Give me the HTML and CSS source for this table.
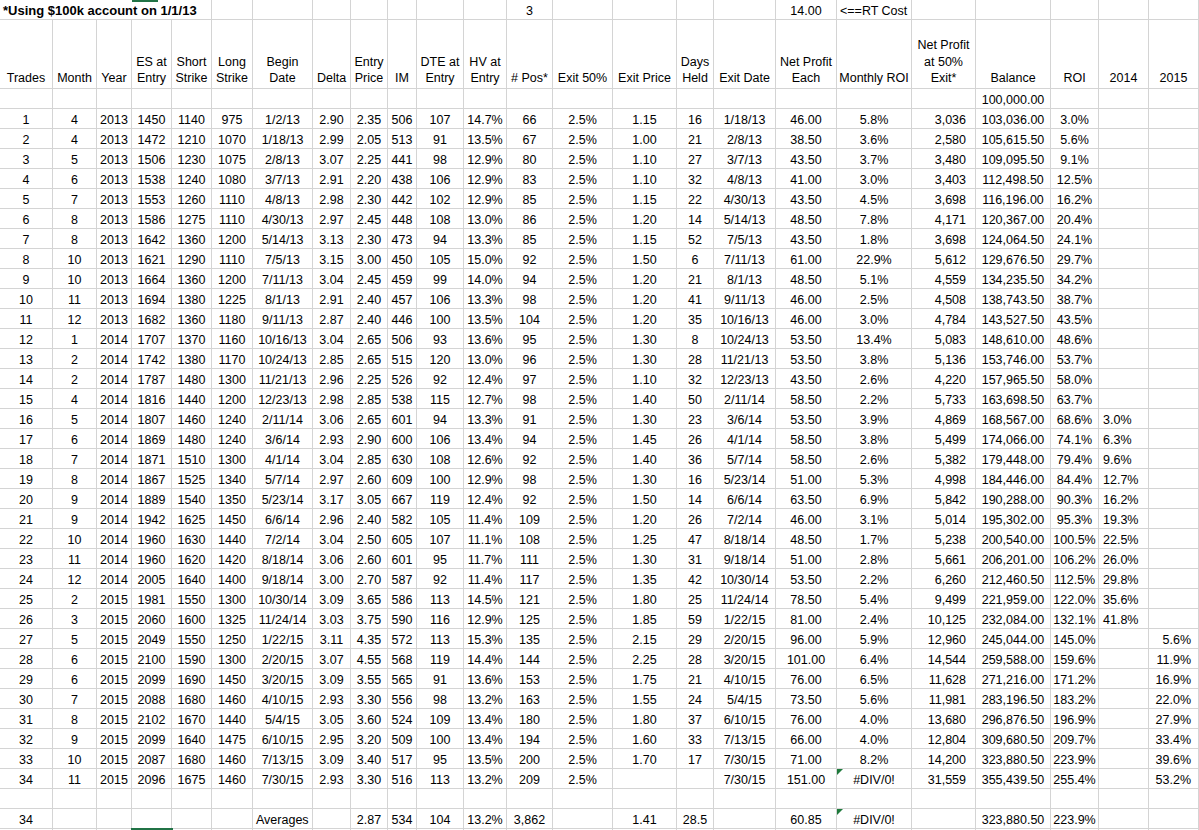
FILE: index.html
```html
<!DOCTYPE html>
<html>
<head>
<meta charset="utf-8">
<title>Trades</title>
<link rel="stylesheet" href="styles.css">
</head>
<body>
<div class="sheet">
  <div class="row top">
    <div class="title">*Using $100k account on 1/1/13</div>
    <div></div><div></div><div></div><div></div><div></div><div></div><div></div>
    <div>3</div>
    <div></div><div></div><div></div><div></div>
    <div>14.00</div>
    <div class="left">&lt;==RT Cost</div>
    <div></div><div></div><div></div><div></div><div></div>
  </div>
  <div class="row head">
    <div><span>Trades</span></div>
    <div><span>Month</span></div>
    <div><span>Year</span></div>
    <div><span>ES at<br>Entry</span></div>
    <div><span>Short<br>Strike</span></div>
    <div><span>Long<br>Strike</span></div>
    <div><span>Begin<br>Date</span></div>
    <div><span>Delta</span></div>
    <div><span>Entry<br>Price</span></div>
    <div><span>IM</span></div>
    <div><span>DTE at<br>Entry</span></div>
    <div><span>HV at<br>Entry</span></div>
    <div><span># Pos*</span></div>
    <div><span>Exit 50%</span></div>
    <div><span>Exit Price</span></div>
    <div><span>Days<br>Held</span></div>
    <div><span>Exit Date</span></div>
    <div><span>Net Profit<br>Each</span></div>
    <div><span>Monthly ROI</span></div>
    <div><span>Net Profit<br>at 50%<br>Exit*</span></div>
    <div><span>Balance</span></div>
    <div><span>ROI</span></div>
    <div><span>2014</span></div>
    <div><span>2015</span></div>
  </div>
  <div class="row"><div></div><div></div><div></div><div></div><div></div><div></div><div></div><div></div><div></div><div></div><div></div><div></div><div></div><div></div><div></div><div></div><div></div><div></div><div></div><div></div><div>100,000.00</div><div></div><div></div><div></div></div>
  <div class="row"><div>1</div><div>4</div><div>2013</div><div>1450</div><div>1140</div><div>975</div><div>1/2/13</div><div>2.90</div><div>2.35</div><div>506</div><div>107</div><div>14.7%</div><div>66</div><div>2.5%</div><div>1.15</div><div>16</div><div>1/18/13</div><div>46.00</div><div>5.8%</div><div>3,036</div><div>103,036.00</div><div>3.0%</div><div></div><div></div></div>
  <div class="row"><div>2</div><div>4</div><div>2013</div><div>1472</div><div>1210</div><div>1070</div><div>1/18/13</div><div>2.99</div><div>2.05</div><div>513</div><div>91</div><div>13.5%</div><div>67</div><div>2.5%</div><div>1.00</div><div>21</div><div>2/8/13</div><div>38.50</div><div>3.6%</div><div>2,580</div><div>105,615.50</div><div>5.6%</div><div></div><div></div></div>
  <div class="row"><div>3</div><div>5</div><div>2013</div><div>1506</div><div>1230</div><div>1075</div><div>2/8/13</div><div>3.07</div><div>2.25</div><div>441</div><div>98</div><div>12.9%</div><div>80</div><div>2.5%</div><div>1.10</div><div>27</div><div>3/7/13</div><div>43.50</div><div>3.7%</div><div>3,480</div><div>109,095.50</div><div>9.1%</div><div></div><div></div></div>
  <div class="row"><div>4</div><div>6</div><div>2013</div><div>1538</div><div>1240</div><div>1080</div><div>3/7/13</div><div>2.91</div><div>2.20</div><div>438</div><div>106</div><div>12.9%</div><div>83</div><div>2.5%</div><div>1.10</div><div>32</div><div>4/8/13</div><div>41.00</div><div>3.0%</div><div>3,403</div><div>112,498.50</div><div>12.5%</div><div></div><div></div></div>
  <div class="row"><div>5</div><div>7</div><div>2013</div><div>1553</div><div>1260</div><div>1110</div><div>4/8/13</div><div>2.98</div><div>2.30</div><div>442</div><div>102</div><div>12.9%</div><div>85</div><div>2.5%</div><div>1.15</div><div>22</div><div>4/30/13</div><div>43.50</div><div>4.5%</div><div>3,698</div><div>116,196.00</div><div>16.2%</div><div></div><div></div></div>
  <div class="row"><div>6</div><div>8</div><div>2013</div><div>1586</div><div>1275</div><div>1110</div><div>4/30/13</div><div>2.97</div><div>2.45</div><div>448</div><div>108</div><div>13.0%</div><div>86</div><div>2.5%</div><div>1.20</div><div>14</div><div>5/14/13</div><div>48.50</div><div>7.8%</div><div>4,171</div><div>120,367.00</div><div>20.4%</div><div></div><div></div></div>
  <div class="row"><div>7</div><div>8</div><div>2013</div><div>1642</div><div>1360</div><div>1200</div><div>5/14/13</div><div>3.13</div><div>2.30</div><div>473</div><div>94</div><div>13.3%</div><div>85</div><div>2.5%</div><div>1.15</div><div>52</div><div>7/5/13</div><div>43.50</div><div>1.8%</div><div>3,698</div><div>124,064.50</div><div>24.1%</div><div></div><div></div></div>
  <div class="row"><div>8</div><div>10</div><div>2013</div><div>1621</div><div>1290</div><div>1110</div><div>7/5/13</div><div>3.15</div><div>3.00</div><div>450</div><div>105</div><div>15.0%</div><div>92</div><div>2.5%</div><div>1.50</div><div>6</div><div>7/11/13</div><div>61.00</div><div>22.9%</div><div>5,612</div><div>129,676.50</div><div>29.7%</div><div></div><div></div></div>
  <div class="row"><div>9</div><div>10</div><div>2013</div><div>1664</div><div>1360</div><div>1200</div><div>7/11/13</div><div>3.04</div><div>2.45</div><div>459</div><div>99</div><div>14.0%</div><div>94</div><div>2.5%</div><div>1.20</div><div>21</div><div>8/1/13</div><div>48.50</div><div>5.1%</div><div>4,559</div><div>134,235.50</div><div>34.2%</div><div></div><div></div></div>
  <div class="row"><div>10</div><div>11</div><div>2013</div><div>1694</div><div>1380</div><div>1225</div><div>8/1/13</div><div>2.91</div><div>2.40</div><div>457</div><div>106</div><div>13.3%</div><div>98</div><div>2.5%</div><div>1.20</div><div>41</div><div>9/11/13</div><div>46.00</div><div>2.5%</div><div>4,508</div><div>138,743.50</div><div>38.7%</div><div></div><div></div></div>
  <div class="row"><div>11</div><div>12</div><div>2013</div><div>1682</div><div>1360</div><div>1180</div><div>9/11/13</div><div>2.87</div><div>2.40</div><div>446</div><div>100</div><div>13.5%</div><div>104</div><div>2.5%</div><div>1.20</div><div>35</div><div>10/16/13</div><div>46.00</div><div>3.0%</div><div>4,784</div><div>143,527.50</div><div>43.5%</div><div></div><div></div></div>
  <div class="row"><div>12</div><div>1</div><div>2014</div><div>1707</div><div>1370</div><div>1160</div><div>10/16/13</div><div>3.04</div><div>2.65</div><div>506</div><div>93</div><div>13.6%</div><div>95</div><div>2.5%</div><div>1.30</div><div>8</div><div>10/24/13</div><div>53.50</div><div>13.4%</div><div>5,083</div><div>148,610.00</div><div>48.6%</div><div></div><div></div></div>
  <div class="row"><div>13</div><div>2</div><div>2014</div><div>1742</div><div>1380</div><div>1170</div><div>10/24/13</div><div>2.85</div><div>2.65</div><div>515</div><div>120</div><div>13.0%</div><div>96</div><div>2.5%</div><div>1.30</div><div>28</div><div>11/21/13</div><div>53.50</div><div>3.8%</div><div>5,136</div><div>153,746.00</div><div>53.7%</div><div></div><div></div></div>
  <div class="row"><div>14</div><div>2</div><div>2014</div><div>1787</div><div>1480</div><div>1300</div><div>11/21/13</div><div>2.96</div><div>2.25</div><div>526</div><div>92</div><div>12.4%</div><div>97</div><div>2.5%</div><div>1.10</div><div>32</div><div>12/23/13</div><div>43.50</div><div>2.6%</div><div>4,220</div><div>157,965.50</div><div>58.0%</div><div></div><div></div></div>
  <div class="row"><div>15</div><div>4</div><div>2014</div><div>1816</div><div>1440</div><div>1200</div><div>12/23/13</div><div>2.98</div><div>2.85</div><div>538</div><div>115</div><div>12.7%</div><div>98</div><div>2.5%</div><div>1.40</div><div>50</div><div>2/11/14</div><div>58.50</div><div>2.2%</div><div>5,733</div><div>163,698.50</div><div>63.7%</div><div></div><div></div></div>
  <div class="row"><div>16</div><div>5</div><div>2014</div><div>1807</div><div>1460</div><div>1240</div><div>2/11/14</div><div>3.06</div><div>2.65</div><div>601</div><div>94</div><div>13.3%</div><div>91</div><div>2.5%</div><div>1.30</div><div>23</div><div>3/6/14</div><div>53.50</div><div>3.9%</div><div>4,869</div><div>168,567.00</div><div>68.6%</div><div>3.0%</div><div></div></div>
  <div class="row"><div>17</div><div>6</div><div>2014</div><div>1869</div><div>1480</div><div>1240</div><div>3/6/14</div><div>2.93</div><div>2.90</div><div>600</div><div>106</div><div>13.4%</div><div>94</div><div>2.5%</div><div>1.45</div><div>26</div><div>4/1/14</div><div>58.50</div><div>3.8%</div><div>5,499</div><div>174,066.00</div><div>74.1%</div><div>6.3%</div><div></div></div>
  <div class="row"><div>18</div><div>7</div><div>2014</div><div>1871</div><div>1510</div><div>1300</div><div>4/1/14</div><div>3.04</div><div>2.85</div><div>630</div><div>108</div><div>12.6%</div><div>92</div><div>2.5%</div><div>1.40</div><div>36</div><div>5/7/14</div><div>58.50</div><div>2.6%</div><div>5,382</div><div>179,448.00</div><div>79.4%</div><div>9.6%</div><div></div></div>
  <div class="row"><div>19</div><div>8</div><div>2014</div><div>1867</div><div>1525</div><div>1340</div><div>5/7/14</div><div>2.97</div><div>2.60</div><div>609</div><div>100</div><div>12.9%</div><div>98</div><div>2.5%</div><div>1.30</div><div>16</div><div>5/23/14</div><div>51.00</div><div>5.3%</div><div>4,998</div><div>184,446.00</div><div>84.4%</div><div>12.7%</div><div></div></div>
  <div class="row"><div>20</div><div>9</div><div>2014</div><div>1889</div><div>1540</div><div>1350</div><div>5/23/14</div><div>3.17</div><div>3.05</div><div>667</div><div>119</div><div>12.4%</div><div>92</div><div>2.5%</div><div>1.50</div><div>14</div><div>6/6/14</div><div>63.50</div><div>6.9%</div><div>5,842</div><div>190,288.00</div><div>90.3%</div><div>16.2%</div><div></div></div>
  <div class="row"><div>21</div><div>9</div><div>2014</div><div>1942</div><div>1625</div><div>1450</div><div>6/6/14</div><div>2.96</div><div>2.40</div><div>582</div><div>105</div><div>11.4%</div><div>109</div><div>2.5%</div><div>1.20</div><div>26</div><div>7/2/14</div><div>46.00</div><div>3.1%</div><div>5,014</div><div>195,302.00</div><div>95.3%</div><div>19.3%</div><div></div></div>
  <div class="row"><div>22</div><div>10</div><div>2014</div><div>1960</div><div>1630</div><div>1440</div><div>7/2/14</div><div>3.04</div><div>2.50</div><div>605</div><div>107</div><div>11.1%</div><div>108</div><div>2.5%</div><div>1.25</div><div>47</div><div>8/18/14</div><div>48.50</div><div>1.7%</div><div>5,238</div><div>200,540.00</div><div>100.5%</div><div>22.5%</div><div></div></div>
  <div class="row"><div>23</div><div>11</div><div>2014</div><div>1960</div><div>1620</div><div>1420</div><div>8/18/14</div><div>3.06</div><div>2.60</div><div>601</div><div>95</div><div>11.7%</div><div>111</div><div>2.5%</div><div>1.30</div><div>31</div><div>9/18/14</div><div>51.00</div><div>2.8%</div><div>5,661</div><div>206,201.00</div><div>106.2%</div><div>26.0%</div><div></div></div>
  <div class="row"><div>24</div><div>12</div><div>2014</div><div>2005</div><div>1640</div><div>1400</div><div>9/18/14</div><div>3.00</div><div>2.70</div><div>587</div><div>92</div><div>11.4%</div><div>117</div><div>2.5%</div><div>1.35</div><div>42</div><div>10/30/14</div><div>53.50</div><div>2.2%</div><div>6,260</div><div>212,460.50</div><div>112.5%</div><div>29.8%</div><div></div></div>
  <div class="row"><div>25</div><div>2</div><div>2015</div><div>1981</div><div>1550</div><div>1300</div><div>10/30/14</div><div>3.09</div><div>3.65</div><div>586</div><div>113</div><div>14.5%</div><div>121</div><div>2.5%</div><div>1.80</div><div>25</div><div>11/24/14</div><div>78.50</div><div>5.4%</div><div>9,499</div><div>221,959.00</div><div>122.0%</div><div>35.6%</div><div></div></div>
  <div class="row"><div>26</div><div>3</div><div>2015</div><div>2060</div><div>1600</div><div>1325</div><div>11/24/14</div><div>3.03</div><div>3.75</div><div>590</div><div>116</div><div>12.9%</div><div>125</div><div>2.5%</div><div>1.85</div><div>59</div><div>1/22/15</div><div>81.00</div><div>2.4%</div><div>10,125</div><div>232,084.00</div><div>132.1%</div><div>41.8%</div><div></div></div>
  <div class="row"><div>27</div><div>5</div><div>2015</div><div>2049</div><div>1550</div><div>1250</div><div>1/22/15</div><div>3.11</div><div>4.35</div><div>572</div><div>113</div><div>15.3%</div><div>135</div><div>2.5%</div><div>2.15</div><div>29</div><div>2/20/15</div><div>96.00</div><div>5.9%</div><div>12,960</div><div>245,044.00</div><div>145.0%</div><div></div><div>5.6%</div></div>
  <div class="row"><div>28</div><div>6</div><div>2015</div><div>2100</div><div>1590</div><div>1300</div><div>2/20/15</div><div>3.07</div><div>4.55</div><div>568</div><div>119</div><div>14.4%</div><div>144</div><div>2.5%</div><div>2.25</div><div>28</div><div>3/20/15</div><div>101.00</div><div>6.4%</div><div>14,544</div><div>259,588.00</div><div>159.6%</div><div></div><div>11.9%</div></div>
  <div class="row"><div>29</div><div>6</div><div>2015</div><div>2099</div><div>1690</div><div>1450</div><div>3/20/15</div><div>3.09</div><div>3.55</div><div>565</div><div>91</div><div>13.6%</div><div>153</div><div>2.5%</div><div>1.75</div><div>21</div><div>4/10/15</div><div>76.00</div><div>6.5%</div><div>11,628</div><div>271,216.00</div><div>171.2%</div><div></div><div>16.9%</div></div>
  <div class="row"><div>30</div><div>7</div><div>2015</div><div>2088</div><div>1680</div><div>1460</div><div>4/10/15</div><div>2.93</div><div>3.30</div><div>556</div><div>98</div><div>13.2%</div><div>163</div><div>2.5%</div><div>1.55</div><div>24</div><div>5/4/15</div><div>73.50</div><div>5.6%</div><div>11,981</div><div>283,196.50</div><div>183.2%</div><div></div><div>22.0%</div></div>
  <div class="row"><div>31</div><div>8</div><div>2015</div><div>2102</div><div>1670</div><div>1440</div><div>5/4/15</div><div>3.05</div><div>3.60</div><div>524</div><div>109</div><div>13.4%</div><div>180</div><div>2.5%</div><div>1.80</div><div>37</div><div>6/10/15</div><div>76.00</div><div>4.0%</div><div>13,680</div><div>296,876.50</div><div>196.9%</div><div></div><div>27.9%</div></div>
  <div class="row"><div>32</div><div>9</div><div>2015</div><div>2099</div><div>1640</div><div>1475</div><div>6/10/15</div><div>2.95</div><div>3.20</div><div>509</div><div>100</div><div>13.4%</div><div>194</div><div>2.5%</div><div>1.60</div><div>33</div><div>7/13/15</div><div>66.00</div><div>4.0%</div><div>12,804</div><div>309,680.50</div><div>209.7%</div><div></div><div>33.4%</div></div>
  <div class="row"><div>33</div><div>10</div><div>2015</div><div>2087</div><div>1680</div><div>1460</div><div>7/13/15</div><div>3.09</div><div>3.40</div><div>517</div><div>95</div><div>13.5%</div><div>200</div><div>2.5%</div><div>1.70</div><div>17</div><div>7/30/15</div><div>71.00</div><div>8.2%</div><div>14,200</div><div>323,880.50</div><div>223.9%</div><div></div><div>39.6%</div></div>
  <div class="row"><div>34</div><div>11</div><div>2015</div><div>2096</div><div>1675</div><div>1460</div><div>7/30/15</div><div>2.93</div><div>3.30</div><div>516</div><div>113</div><div>13.2%</div><div>209</div><div>2.5%</div><div></div><div></div><div>7/30/15</div><div>151.00</div><div class="err">#DIV/0!</div><div>31,559</div><div>355,439.50</div><div>255.4%</div><div></div><div>53.2%</div></div>
  <div class="row"><div></div><div></div><div></div><div></div><div></div><div></div><div></div><div></div><div></div><div></div><div></div><div></div><div></div><div></div><div></div><div></div><div></div><div></div><div></div><div></div><div></div><div></div><div></div><div></div></div>
  <div class="row"><div>34</div><div></div><div></div><div></div><div></div><div></div><div class="left">Averages</div><div></div><div>2.87</div><div>534</div><div>104</div><div>13.2%</div><div>3,862</div><div></div><div>1.41</div><div>28.5</div><div></div><div>60.85</div><div class="err">#DIV/0!</div><div></div><div>323,880.50</div><div>223.9%</div><div></div><div></div></div>
  <div class="row"><div></div><div></div><div></div><div class="sel"></div><div></div><div></div><div></div><div></div><div></div><div></div><div></div><div></div><div></div><div></div><div></div><div></div><div></div><div></div><div></div><div></div><div></div><div></div><div></div><div></div></div>
</div>
</body>
</html>
```
FILE: styles.css
```css
html, body {
  margin: 0;
  padding: 0;
  background: #ffffff;
}

.sheet {
  position: relative;
  width: 1199px;
  height: 830px;
  overflow: hidden;
  font-family: "Liberation Sans", Arial, sans-serif;
  font-size: 12.5px;
  color: #000000;
}

.sheet::before {
  content: "";
  position: absolute;
  left: 132px;
  top: 0;
  width: 26px;
  height: 2px;
  background: #217346;
}

.row {
  display: grid;
  grid-template-columns: 53px 44px 35px 40px 40px 41px 60px 38px 37px 29px 47px 43px 46px 60px 64px 37px 62px 61px 75px 64px 75px 48px 50px 50px;
  height: 20px;
}

.row > div {
  box-sizing: border-box;
  border-right: 1px solid #d4d4d4;
  border-bottom: 1px solid #d4d4d4;
  text-align: center;
  padding-top: 3px;
  line-height: 16px;
  white-space: nowrap;
}

.row > div:nth-child(20) {
  text-align: right;
  padding-right: 9px;
}

.row > div:nth-child(23) {
  text-align: left;
  padding-left: 4px;
}

.row > div:nth-child(24) {
  text-align: right;
  padding-right: 7px;
}

.row > div.left {
  text-align: left;
  padding-left: 3px;
}

.top > div.title {
  grid-column: span 5;
  text-align: left;
  padding-left: 3px;
  font-weight: bold;
  font-size: 13px;
}

.head {
  height: 69px;
}

.head > div {
  display: flex;
  align-items: flex-end;
  justify-content: center;
  padding-top: 0;
  padding-bottom: 1px;
  line-height: 16.7px;
}

.head > div:nth-child(20),
.head > div:nth-child(23),
.head > div:nth-child(24) {
  text-align: center;
  padding-left: 0;
  padding-right: 0;
}

.head > div > span {
  display: block;
  text-align: center;
}

.err {
  position: relative;
}

.err::before {
  content: "";
  position: absolute;
  left: 0;
  top: 0;
  width: 0;
  height: 0;
  border-top: 6px solid #1f7a3c;
  border-right: 6px solid transparent;
}

.sel {
  outline: 2px solid #217346;
  outline-offset: -1px;
}
```
